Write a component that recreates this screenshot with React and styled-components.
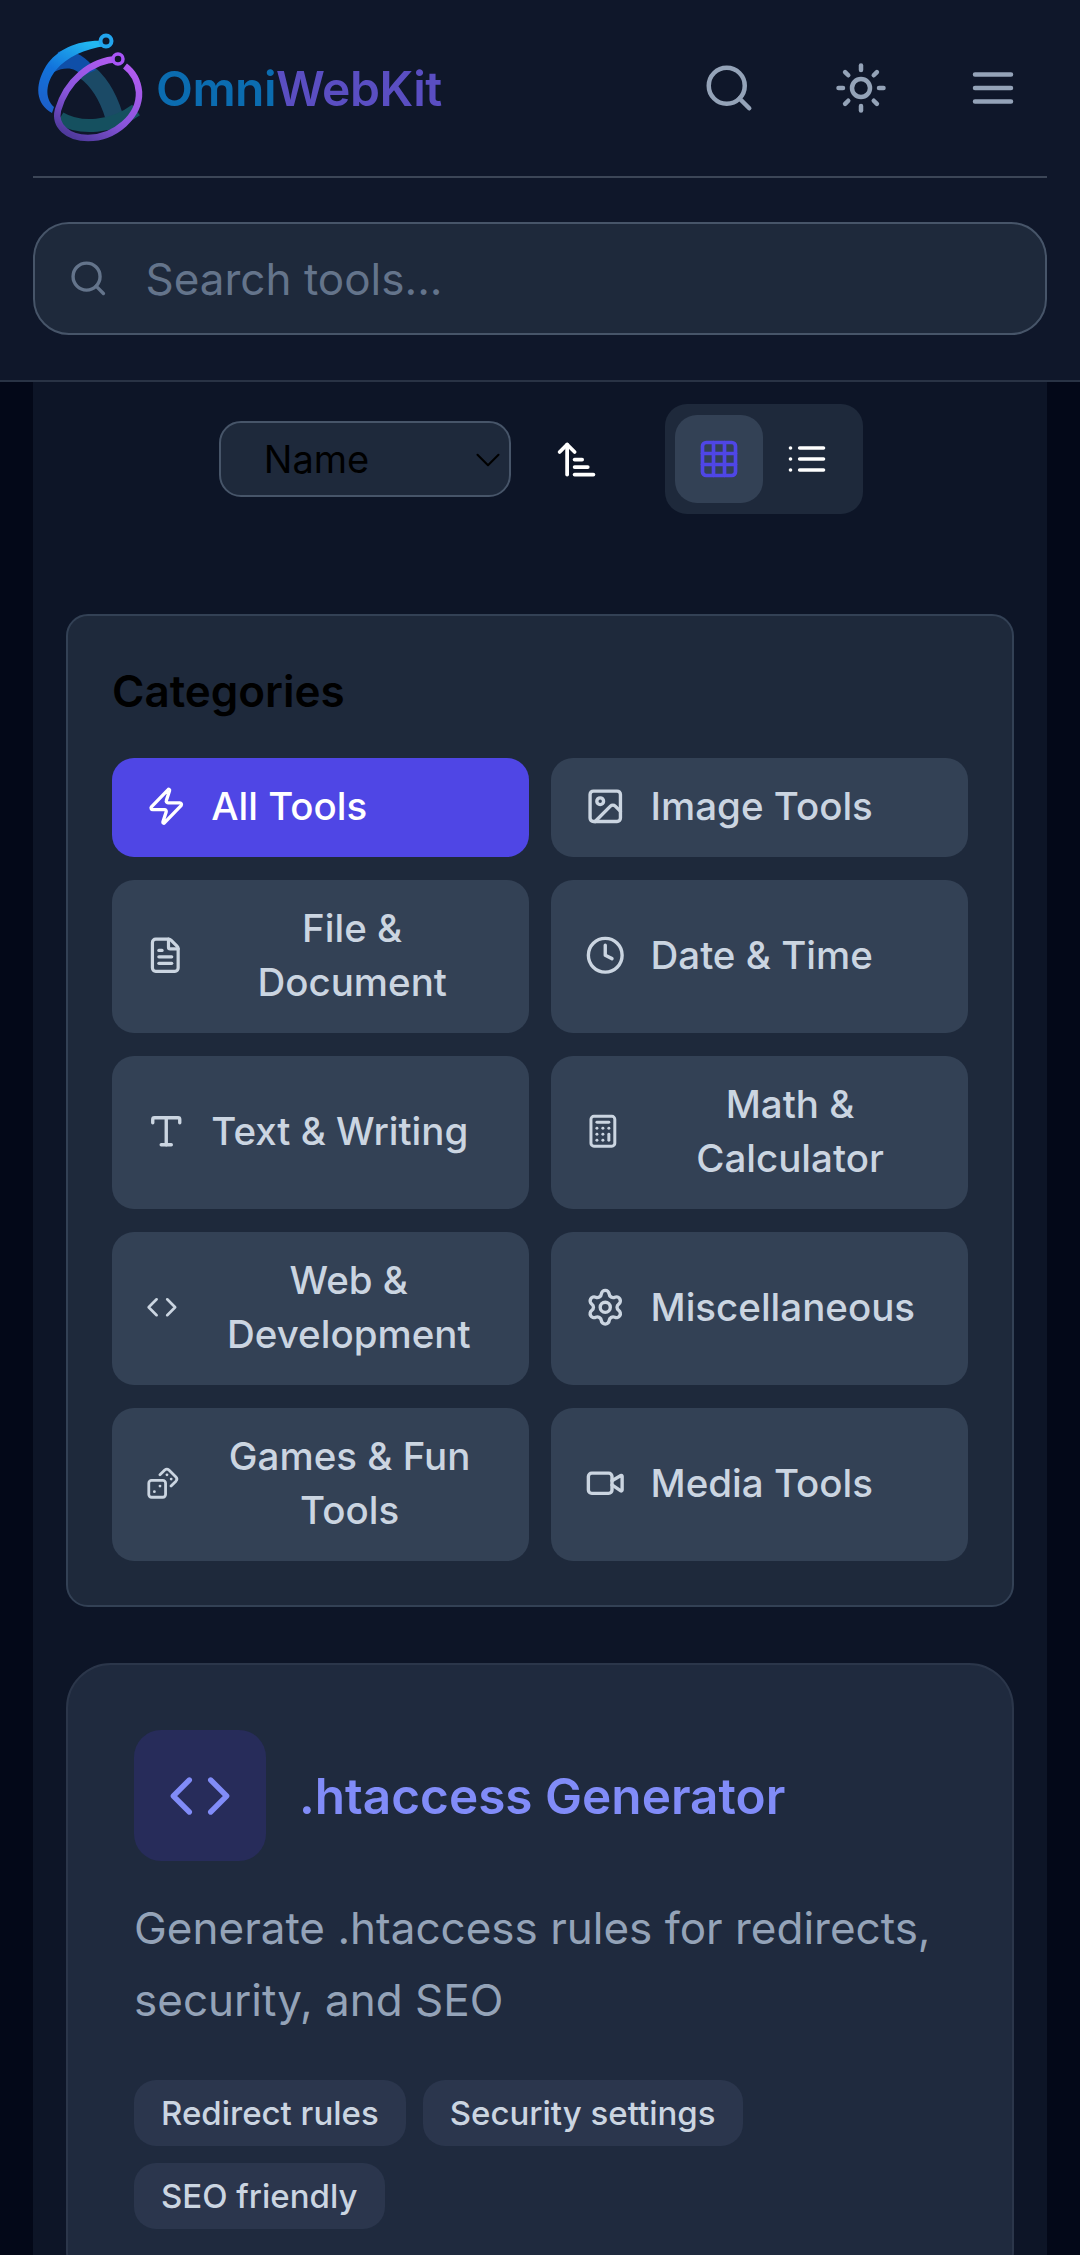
import styled, { createGlobalStyle } from "styled-components";
import {
  ArrowUpNarrowWide,
  Calculator,
  ChevronDown,
  Clock,
  Code,
  Dices,
  FileText,
  Grid3x3,
  Image,
  Search,
  Settings,
  Sun,
  Type,
  Video,
  Zap,
} from "lucide-react";

const categories = [
  { label: "All Tools", icon: Zap, active: true },
  { label: "Image Tools", icon: Image },
  { label: "File & Document", icon: FileText },
  { label: "Date & Time", icon: Clock },
  { label: "Text & Writing", icon: Type },
  { label: "Math & Calculator", icon: Calculator },
  { label: "Web & Development", icon: Code },
  { label: "Miscellaneous", icon: Settings },
  { label: "Games & Fun Tools", icon: Dices },
  { label: "Media Tools", icon: Video },
];

const features = ["Redirect rules", "Security settings", "SEO friendly"];

function LogoMark() {
  return (
    <LogoSvg viewBox="30 32 116 116">
      <defs>
        <linearGradient id="blueArc" x1="0.7" y1="0" x2="0.2" y2="1">
          <stop offset="0" stopColor="#22b8f0" />
          <stop offset="0.5" stopColor="#1273dc" />
          <stop offset="1" stopColor="#1c5fc9" />
        </linearGradient>
        <linearGradient id="purpleArc" x1="0.8" y1="0" x2="0.2" y2="1">
          <stop offset="0" stopColor="#b45cf2" />
          <stop offset="0.6" stopColor="#8a55dc" />
          <stop offset="1" stopColor="#4f3a9c" />
        </linearGradient>
      </defs>
      <path d="M84 72c14 10 24 26 30 46" fill="none" stroke="#1b4a66" strokeWidth="18" />
      <path d="M60 120c20 12 52 10 76-8" fill="none" stroke="#15505f" strokeWidth="13" />
      <path d="M58 54c12-4 26 2 38 18l-14 6c-6-8-16-10-28-4z" fill="#0f4fa8" />
      <path
        d="M106 43C80 41 58 50 46 68c-12 20-10 38 6 47l2-6C44 100 46 84 56 72c11-13 28-21 50-24z"
        fill="url(#blueArc)"
      />
      <circle cx="106" cy="43" r="5.5" fill="#0f172a" stroke="#22a5ee" strokeWidth="4" />
      <path
        d="M118 61C90 62 66 84 58 112c-4 16 10 28 30 28 27 0 52-22 51-46-1-12-6-20-14-26"
        fill="none"
        stroke="url(#purpleArc)"
        strokeWidth="6.5"
      />
      <circle cx="118" cy="61" r="5" fill="#0f172a" stroke="#a855f7" strokeWidth="3.5" />
    </LogoSvg>
  );
}

export default function App() {
  return (
    <Page>
      <GlobalStyle />
      <Header>
        <TopRow>
          <LogoMark />
          <LogoText>
            <LogoBlue>Omni</LogoBlue>
            <LogoPurple>WebKit</LogoPurple>
          </LogoText>
          <HeaderActions>
            <HeaderButton aria-label="Search">
              <Search />
            </HeaderButton>
            <HeaderButton aria-label="Theme">
              <Sun />
            </HeaderButton>
            <HeaderButton aria-label="Menu">
              <svg viewBox="0 0 24 24" fill="none" stroke="currentColor" strokeWidth="2" strokeLinecap="round">
                <path d="M4 6h16M4 12h16M4 18h16" />
              </svg>
            </HeaderButton>
          </HeaderActions>
        </TopRow>
        <SearchBox>
          <Search />
          <SearchInput placeholder="Search tools..." />
        </SearchBox>
      </Header>

      <Main>
        <SortRow>
          <SelectWrap>
            <SortSelect defaultValue="name">
              <option value="name">Name</option>
              <option value="category">Category</option>
            </SortSelect>
            <SelectArrow strokeWidth={1.2} />
          </SelectWrap>
          <SortButton aria-label="Sort direction">
            <ArrowUpNarrowWide />
          </SortButton>
          <ViewToggle>
            <ViewButton $active aria-label="Grid view">
              <Grid3x3 />
            </ViewButton>
            <ViewButton aria-label="List view">
              <svg viewBox="0 0 24 24" fill="none" stroke="currentColor" strokeWidth="2" strokeLinecap="round">
                <path d="M8 6h13M8 12h13M8 18h13M3 6h.01M3 12h.01M3 18h.01" />
              </svg>
            </ViewButton>
          </ViewToggle>
        </SortRow>

        <CategoriesCard>
          <CategoriesTitle>Categories</CategoriesTitle>
          <CategoryGrid>
            {categories.map(({ label, icon: Icon, active }) => (
              <CategoryButton key={label} $active={active}>
                <Icon />
                <span>{label}</span>
              </CategoryButton>
            ))}
          </CategoryGrid>
        </CategoriesCard>

        <ToolCard>
          <ToolHead>
            <ToolIcon>
              <Code />
            </ToolIcon>
            <ToolTitle>.htaccess Generator</ToolTitle>
          </ToolHead>
          <ToolDescription>
            Generate .htaccess rules for redirects, security, and SEO
          </ToolDescription>
          <FeatureList>
            {features.map((feature) => (
              <Feature key={feature}>{feature}</Feature>
            ))}
          </FeatureList>
        </ToolCard>
      </Main>
    </Page>
  );
}

const GlobalStyle = createGlobalStyle`
  html, body {
    margin: 0;
    padding: 0;
    background: #030818;
  }
  * {
    box-sizing: border-box;
  }
`;

const Page = styled.div`
  width: 1080px;
  height: 2255px;
  overflow: hidden;
  background: #030818;
  font-family: Inter, "Liberation Sans", sans-serif;
`;

const Header = styled.header`
  height: 382px;
  padding: 0 33px;
  background: #0f172a;
  border-bottom: 2px solid #293345;
`;

const TopRow = styled.div`
  height: 178px;
  display: flex;
  align-items: center;
  border-bottom: 2px solid #3c4657;
`;

const LogoSvg = styled.svg`
  width: 116px;
  height: 116px;
  flex-shrink: 0;
  margin-left: -3px;
  filter: blur(0.6px);
`;

const LogoText = styled.div`
  margin-left: 10px;
  font-size: 48px;
  font-weight: 600;
  letter-spacing: -0.5px;
  filter: blur(0.4px);
`;

const LogoBlue = styled.span`
  color: #0b6cb0;
`;

const LogoPurple = styled.span`
  color: #5a4ec2;
`;

const HeaderActions = styled.div`
  margin-left: auto;
  display: flex;
  gap: 24px;
`;

const HeaderButton = styled.button`
  width: 108px;
  height: 108px;
  padding: 0;
  border: 0;
  background: transparent;
  color: #94a3b8;
  display: flex;
  align-items: center;
  justify-content: center;

  svg {
    width: 54px;
    height: 54px;
  }
`;

const SearchBox = styled.div`
  height: 113px;
  margin-top: 44px;
  padding: 0 33px;
  display: flex;
  align-items: center;
  gap: 37px;
  background: #1e293b;
  border: 2px solid #475569;
  border-radius: 36px;
  color: #64748b;

  svg {
    width: 40.5px;
    height: 40.5px;
    flex-shrink: 0;
  }
`;

const SearchInput = styled.input`
  flex: 1;
  min-width: 0;
  padding: 0;
  border: 0;
  outline: 0;
  background: transparent;
  font-family: inherit;
  font-size: 44px;
  color: #e2e8f0;

  &::placeholder {
    color: #64748b;
    opacity: 1;
  }
`;

const Main = styled.main`
  width: 1014px;
  height: 1873px;
  margin: 0 auto;
  padding: 22px 33px 0;
  background: #0d1527;
`;

const SortRow = styled.div`
  margin-left: 2px;
  display: flex;
  align-items: center;
  justify-content: center;
  gap: 22.5px;
`;

const SelectWrap = styled.div`
  position: relative;
  width: 292px;
  height: 76px;
`;

const SortSelect = styled.select`
  width: 100%;
  height: 100%;
  padding: 0 18px 0 43px;
  appearance: none;
  background-color: #1e293b;
  border: 2px solid #475569;
  border-radius: 22px;
  font-family: inherit;
  font-size: 38px;
  color: #000;
`;

const SelectArrow = styled(ChevronDown)`
  position: absolute;
  top: 18px;
  right: 2px;
  width: 42px;
  height: 42px;
  color: #000;
  pointer-events: none;
`;

const SortButton = styled.button`
  width: 85.5px;
  height: 85.5px;
  padding: 0;
  border: 0;
  background: transparent;
  color: #fff;
  display: flex;
  align-items: center;
  justify-content: center;

  svg {
    width: 45px;
    height: 45px;
  }
`;

const ViewToggle = styled.div`
  margin-left: 24px;
  padding: 11px 12px 11px 10px;
  display: flex;
  background: #1e293b;
  border-radius: 22px;
`;

const ViewButton = styled.button`
  width: 88px;
  height: 88px;
  padding: 0;
  border: 0;
  border-radius: 22px;
  background: ${(p) => (p.$active ? "#334155" : "transparent")};
  color: ${(p) => (p.$active ? "#4f46e5" : "#fff")};
  display: flex;
  align-items: center;
  justify-content: center;

  svg {
    width: 44px;
    height: 44px;
  }
`;

const CategoriesCard = styled.section`
  margin-top: 100px;
  padding: 45px 44px 44px;
  background: #1e293b;
  border: 2px solid #334155;
  border-radius: 22px;
`;

const CategoriesTitle = styled.h2`
  margin: 0 0 36px;
  font-size: 44px;
  line-height: 61px;
  font-weight: 600;
  color: #000;
`;

const CategoryGrid = styled.div`
  display: grid;
  grid-template-columns: 1fr 1fr;
  gap: 23px 22.5px;
`;

const CategoryButton = styled.button`
  min-width: 0;
  padding: 21px 33.75px 24px;
  display: flex;
  align-items: center;
  gap: 25px;
  border: 0;
  border-radius: 22px;
  background: ${(p) => (p.$active ? "#4f46e5" : "#334155")};
  color: ${(p) => (p.$active ? "#fff" : "#cbd5e1")};
  font-family: inherit;
  font-size: 38.5px;
  line-height: 54px;
  font-weight: 500;
  text-align: center;

  svg {
    width: 40.5px;
    height: 40.5px;
  }
`;

const ToolCard = styled.article`
  margin-top: 56px;
  padding: 65px 66px;
  background: #1f2a3e;
  border: 2px solid #2b364a;
  border-radius: 45px;
`;

const ToolHead = styled.div`
  display: flex;
  align-items: center;
  gap: 33px;
`;

const ToolIcon = styled.div`
  width: 132px;
  height: 131px;
  display: flex;
  align-items: center;
  justify-content: center;
  background: #272c5a;
  border-radius: 27px;
  color: #818cf8;

  svg {
    width: 64px;
    height: 64px;
  }
`;

const ToolTitle = styled.h3`
  margin: 0;
  font-size: 49.5px;
  font-weight: 600;
  color: #818cf8;
`;

const ToolDescription = styled.p`
  margin: 31px 0 44px;
  font-size: 44px;
  line-height: 72px;
  color: #94a3b8;
`;

const FeatureList = styled.div`
  display: flex;
  flex-wrap: wrap;
  gap: 17px;
`;

const Feature = styled.span`
  height: 66px;
  padding: 0 27px;
  display: flex;
  align-items: center;
  background: #2b364d;
  border-radius: 22px;
  font-size: 33px;
  font-weight: 500;
  color: #cbd5e1;
`;
